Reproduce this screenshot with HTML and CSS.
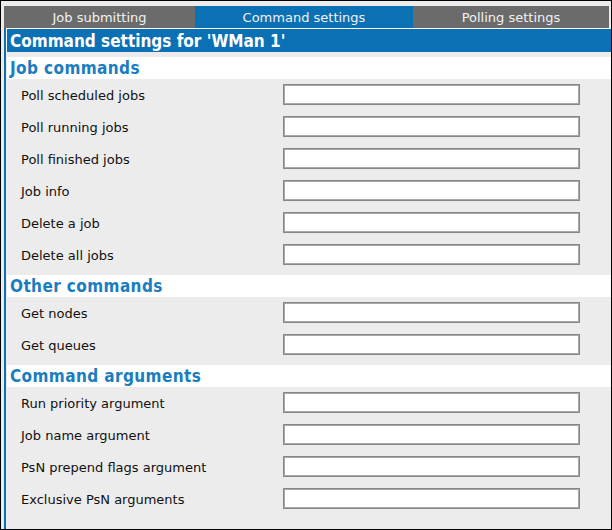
FILE: index.html
```html
<!DOCTYPE html>
<html>
<head>
<meta charset="utf-8">
<link rel="stylesheet" href="styles.css">
</head>
<body>
<div class="frame">
  <div class="tabs">
    <div class="tab tab-1">Job submitting</div>
    <div class="tab tab-2 active">Command settings</div>
    <div class="tab tab-3">Polling settings</div>
  </div>
  <div class="panel">
    <div class="title">Command settings for 'WMan 1'</div>
    <div class="section first">
      <div class="section-head">Job commands</div>
      <div class="row"><span class="label">Poll scheduled jobs</span><span class="field"></span></div>
      <div class="row"><span class="label">Poll running jobs</span><span class="field"></span></div>
      <div class="row"><span class="label">Poll finished jobs</span><span class="field"></span></div>
      <div class="row"><span class="label">Job info</span><span class="field"></span></div>
      <div class="row"><span class="label">Delete a job</span><span class="field"></span></div>
      <div class="row"><span class="label">Delete all jobs</span><span class="field"></span></div>
    </div>
    <div class="section">
      <div class="section-head">Other commands</div>
      <div class="row"><span class="label">Get nodes</span><span class="field"></span></div>
      <div class="row"><span class="label">Get queues</span><span class="field"></span></div>
    </div>
    <div class="section">
      <div class="section-head">Command arguments</div>
      <div class="row"><span class="label">Run priority argument</span><span class="field"></span></div>
      <div class="row"><span class="label">Job name argument</span><span class="field"></span></div>
      <div class="row"><span class="label">PsN prepend flags argument</span><span class="field"></span></div>
      <div class="row"><span class="label">Exclusive PsN arguments</span><span class="field"></span></div>
    </div>
  </div>
</div>
</body>
</html>
```
FILE: styles.css
```css
html, body {
  margin: 0;
  padding: 0;
}
body {
  font-family: "DejaVu Sans", Verdana, sans-serif;
}
.frame {
  box-sizing: border-box;
  width: 612px;
  height: 530px;
  border: 1px solid #000;
  background: #ececec;
  padding: 5px 0 0 3px;
  display: flex;
  flex-direction: column;
}
.tabs {
  display: flex;
  height: 22px;
  margin-right: 2px;
}
.tab {
  display: flex;
  align-items: center;
  justify-content: center;
  background: #6b6b6b;
  color: #f2f2f2;
  font-size: 13px;
}
.tab-1 { width: 191px; }
.tab-2 { width: 218px; }
.tab-3 { width: 196px; }
.tab.active { background: #0b70b4; }
.panel {
  flex: 1;
  border-left: 2px solid #0b70b4;
  display: flex;
  flex-direction: column;
}
.title {
  height: 23px;
  border-top: 1px solid #fff;
  border-left: 1px solid #fff;
  background: #0b70b4;
  color: #fff;
  font-weight: bold;
  font-stretch: condensed;
  font-size: 17px;
  padding-left: 3px;
  display: flex;
  align-items: center;
}
.section { margin-top: 4px; }
.section.first { margin-top: 5px; }
.section-head {
  height: 22px;
  margin-left: 1px;
  background: #fff;
  color: #1a7dc0;
  font-weight: bold;
  font-stretch: condensed;
  font-size: 17px;
  letter-spacing: 0.4px;
  padding-left: 3px;
  display: flex;
  align-items: center;
}
.row {
  display: flex;
  align-items: center;
  height: 21px;
  padding: 5px 0 6px;
}
.label {
  width: 262px;
  padding-left: 15px;
  padding-top: 1px;
  font-size: 13px;
  color: #111;
}
.field {
  box-sizing: border-box;
  width: 297px;
  height: 21px;
  background: #fff;
  border: 1px solid #878787;
  box-shadow: inset 0 0 0 1px #a8a8a8;
}
```
